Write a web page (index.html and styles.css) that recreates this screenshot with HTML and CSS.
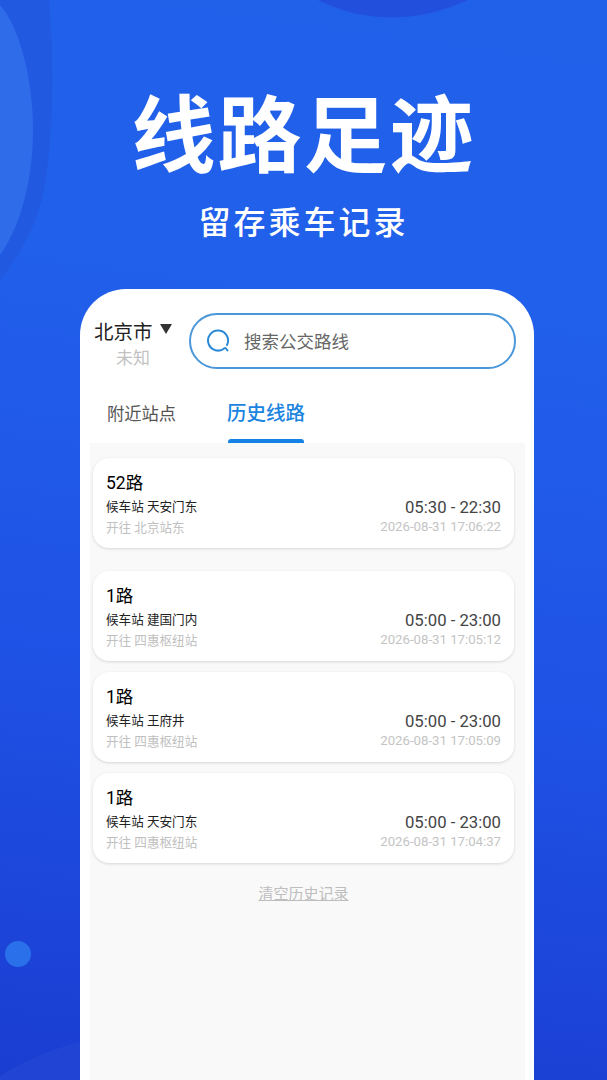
FILE: index.html
```html
<!DOCTYPE html>
<html lang="zh-CN">
<head>
  <meta charset="UTF-8">
  <meta name="viewport" content="width=device-width, initial-scale=1.0">
  <title>线路足迹</title>
  <link rel="stylesheet" href="styles.css">
</head>
<body>
  <div class="screen">
    <svg class="bg-shapes" width="607" height="1080" viewBox="0 0 607 1080">
      <path d="M0 0 H49 C54 60 54 130 44 190 C37 225 20 255 0 280 Z" fill="#2159e0"/>
      <path d="M0 5 C18 25 33 75 33 130 C33 185 18 230 0 255 Z" fill="#2f6cea"/>
      <path d="M318 0 C345 14 375 19 405 17 C430 15 450 8 468 0 Z" fill="#2250dc"/>
      <path d="M0 1080 V1076 C25 1060 55 1048 80 1042 V1080 Z" fill="#2244d4"/>
      <circle cx="18" cy="954" r="13" fill="#2a70ea"/>
    </svg>

    <header class="hero">
      <h1 class="hero-title">线路足迹</h1>
      <p class="hero-sub">留存乘车记录</p>
    </header>

    <div class="phone">
      <div class="top-row">
        <div class="city">
          <div class="city-name">北京市<span class="city-arrow"></span></div>
          <div class="city-state">未知</div>
        </div>
        <div class="search">
          <svg class="search-icon" width="26" height="26" viewBox="0 0 26 26" fill="none">
            <path d="M18.5 20.2 A10 10 0 1 1 21 17" stroke="#2b8ad8" stroke-width="2" stroke-linecap="round"/>
            <path d="M19.5 20 L21.5 22.5" stroke="#2b8ad8" stroke-width="2" stroke-linecap="round"/>
          </svg>
          <span class="search-text">搜索公交路线</span>
        </div>
      </div>

      <div class="tabs">
        <div class="tab">附近站点</div>
        <div class="tab tab-active">历史线路</div>
      </div>

      <div class="panel">
        <div class="line-card line-card-first">
          <div class="line-name">52路</div>
          <div class="line-row">
            <span class="line-stop">候车站 天安门东</span>
            <span class="line-time">05:30 - 22:30</span>
          </div>
          <div class="line-row">
            <span class="line-dest">开往 北京站东</span>
            <span class="line-date">2026-08-31 17:06:22</span>
          </div>
        </div>

        <div class="line-card">
          <div class="line-name">1路</div>
          <div class="line-row">
            <span class="line-stop">候车站 建国门内</span>
            <span class="line-time">05:00 - 23:00</span>
          </div>
          <div class="line-row">
            <span class="line-dest">开往 四惠枢纽站</span>
            <span class="line-date">2026-08-31 17:05:12</span>
          </div>
        </div>

        <div class="line-card">
          <div class="line-name">1路</div>
          <div class="line-row">
            <span class="line-stop">候车站 王府井</span>
            <span class="line-time">05:00 - 23:00</span>
          </div>
          <div class="line-row">
            <span class="line-dest">开往 四惠枢纽站</span>
            <span class="line-date">2026-08-31 17:05:09</span>
          </div>
        </div>

        <div class="line-card">
          <div class="line-name">1路</div>
          <div class="line-row">
            <span class="line-stop">候车站 天安门东</span>
            <span class="line-time">05:00 - 23:00</span>
          </div>
          <div class="line-row">
            <span class="line-dest">开往 四惠枢纽站</span>
            <span class="line-date">2026-08-31 17:04:37</span>
          </div>
        </div>

        <div class="clear-history">清空历史记录</div>
      </div>
    </div>
  </div>
</body>
</html>
```

FILE: styles.css
```css
* {
  margin: 0;
  padding: 0;
  box-sizing: border-box;
}

body {
  width: 607px;
  height: 1080px;
  overflow: hidden;
  font-family: Roboto, "Noto Sans CJK SC", sans-serif;
}

.screen {
  position: relative;
  width: 607px;
  height: 1080px;
  overflow: hidden;
  background: linear-gradient(188deg, #2161ea 0%, #2160ea 28%, #1f52e6 62%, #1a3dd0 100%);
}

.bg-shapes {
  position: absolute;
  left: 0;
  top: 0;
}

.hero {
  position: relative;
  height: 289px;
  padding-top: 70px;
  text-align: center;
  color: #fff;
}

.hero-title {
  font-size: 84px;
  line-height: 120px;
  font-weight: 700;
  letter-spacing: 2px;
  font-family: "Noto Sans CJK SC", sans-serif;
}

.hero-sub {
  font-size: 32px;
  line-height: 60px;
  font-weight: 500;
  letter-spacing: 3px;
  font-family: "Noto Sans CJK SC", sans-serif;
}

.phone {
  position: relative;
  width: 454px;
  height: 791px;
  margin-left: 80px;
  background: #fff;
  border-radius: 46px 46px 0 0;
}

.top-row {
  display: flex;
  padding: 24px 18px 0 14px;
}

.city {
  width: 95px;
  flex-shrink: 0;
}

.city-name {
  display: flex;
  align-items: center;
  height: 34px;
  font-size: 19.5px;
  color: #222;
}

.city-arrow {
  width: 0;
  height: 0;
  margin: 0 0 2px 7px;
  border-left: 6px solid transparent;
  border-right: 6px solid transparent;
  border-top: 10px solid #333;
}

.city-state {
  padding-left: 22px;
  margin-top: 3px;
  font-size: 17px;
  line-height: 16px;
  color: #c2c2c2;
}

.search {
  flex: 1;
  display: flex;
  align-items: center;
  height: 56px;
  padding-left: 15px;
  border: 2px solid #4a97da;
  border-radius: 28px;
}

.search-text {
  margin: 0 0 2px 12px;
  font-size: 17.5px;
  color: #666;
}

.tabs {
  display: flex;
  height: 74px;
  padding-left: 27px;
}

.tab {
  width: 120px;
  padding-top: 30px;
  font-size: 17.3px;
  line-height: 30px;
  color: #555;
}

.tab-active {
  position: relative;
  font-size: 19.5px;
  font-weight: 500;
  color: #1a84e0;
}

.tab-active::after {
  content: "";
  position: absolute;
  left: 1px;
  bottom: 0;
  width: 76px;
  height: 4px;
  background: #1583e6;
  border-radius: 3px 3px 0 0;
}

.panel {
  height: 640px;
  margin: 0 9px 0 10px;
  padding: 15px 11px 0 3px;
  background: #f9f9f9;
}

.line-card {
  height: 90px;
  margin-bottom: 11px;
  padding: 14px 13px 0 13px;
  background: #fff;
  border-radius: 16px;
  box-shadow: 0 1px 3px rgba(0, 0, 0, 0.14);
}

.line-card-first {
  margin-bottom: 23px;
}

.line-name {
  font-size: 17.5px;
  line-height: 23px;
  color: #000;
}

.line-row {
  display: flex;
  justify-content: space-between;
  align-items: center;
  height: 21px;
}

.line-stop {
  font-size: 12.6px;
  color: #222;
}

.line-dest {
  font-size: 12.6px;
  color: #c0c0c0;
}

.line-time {
  margin-top: 3px;
  font-size: 16.7px;
  color: #444;
}

.line-date {
  font-size: 13.2px;
  color: #c4c4c4;
}

.clear-history {
  margin-top: 20px;
  text-align: center;
  font-size: 15px;
  line-height: 22px;
  color: #bdbdbd;
  text-decoration: underline;
}
```
